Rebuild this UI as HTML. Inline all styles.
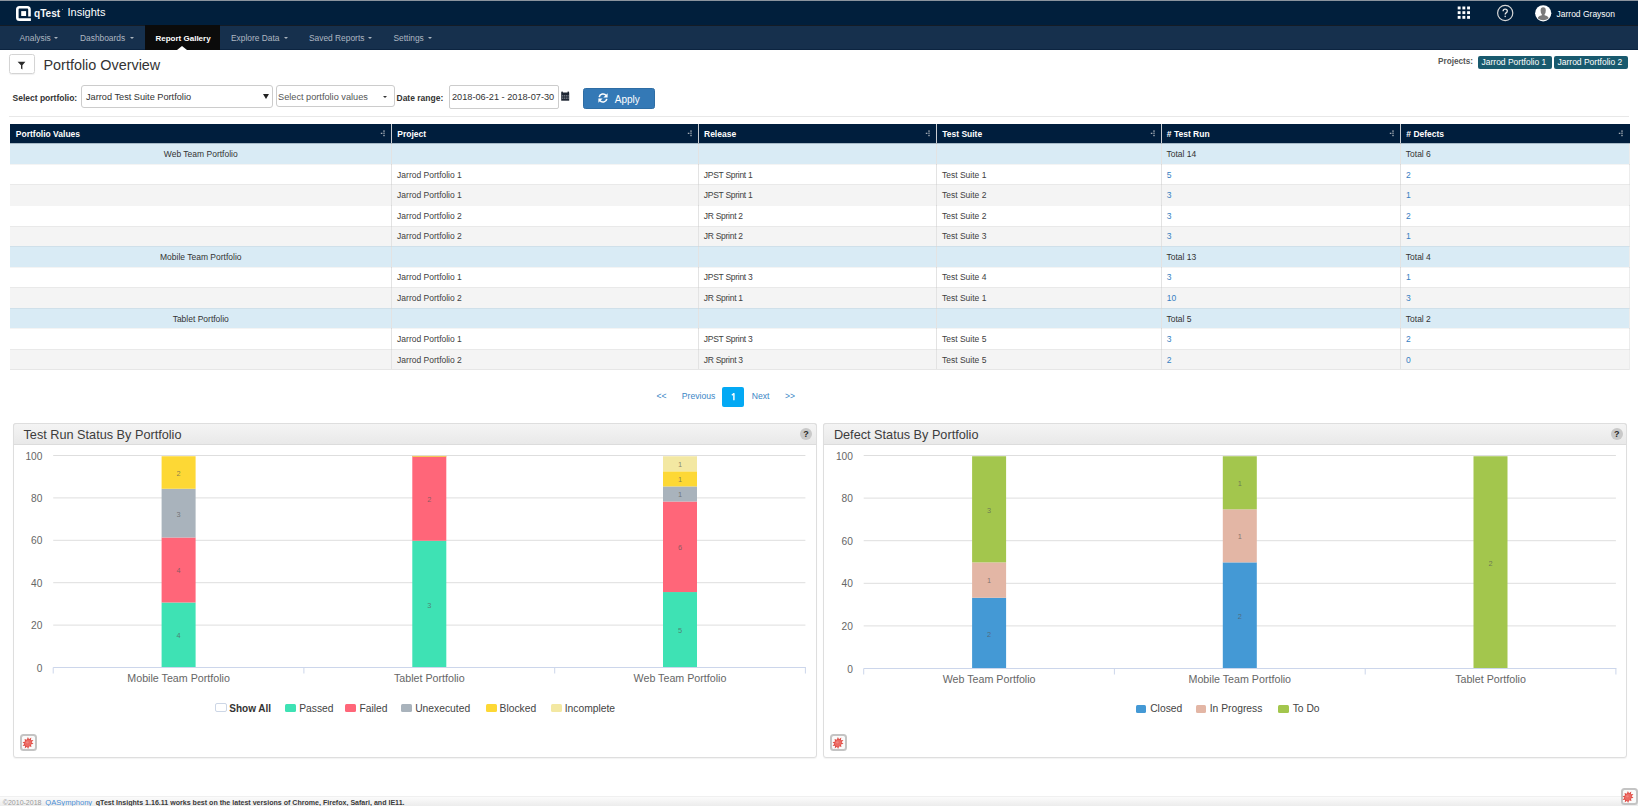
<!DOCTYPE html>
<html><head><meta charset="utf-8"><style>
*{box-sizing:border-box;margin:0;padding:0}
html,body{width:1638px;height:806px;overflow:hidden}
body{position:relative;background:#fff;font-family:"Liberation Sans",sans-serif;color:#333}
.a{position:absolute;white-space:nowrap}
.t{position:absolute;white-space:nowrap;line-height:20px;height:20px}
.hdr{left:0;top:0;width:1638px;height:25.3px;background:#011f3c;border-top:1px solid #8b949e}
.nav{left:0;top:25.3px;width:1638px;height:24.7px;background:#16304d;border-top:1px solid #141c26;border-bottom:1px solid #0c2440}
.navi{color:#aeb7c2;font-size:8.4px;top:28.4px}
.caret{position:absolute;width:0;height:0;border-left:2.6px solid transparent;border-right:2.6px solid transparent;border-top:2.7px solid #aab3bd;margin-top:-0.2px}
.th{color:#fff;font-weight:bold;font-size:8.5px}
.td{color:#404040;font-size:8.5px;margin-top:0.5px}
.lk{color:#3680c2}
.pg{color:#3b86c6;font-size:8.6px}
.lg{color:#444;font-size:10.3px;margin-top:1.2px}
</style></head><body>

<!-- header -->
<div class="a hdr"></div>
<svg class="a" style="left:16px;top:6px" width="17" height="16" viewBox="0 0 17 16">
  <path d="M13.5 10.4 V3.4 Q13.5 1.3 11.4 1.3 H3.4 Q1.3 1.3 1.3 3.4 V11.4 Q1.3 13.6 3.4 13.6 H14.9" fill="none" stroke="#fff" stroke-width="2.6"/>
  <rect x="5.2" y="5.1" width="4.9" height="4.9" fill="#fff"/>
</svg>
<div class="a" style="left:61.5px;top:8.5px;width:1.5px;height:1.5px;border-radius:50%;background:#9aa5b1"></div>
<div class="t" style="left:34px;top:3.7px;color:#f4f6f8;font-size:10.1px;font-weight:bold">qTest</div>
<div class="t" style="left:67.5px;top:2.1px;color:#fff;font-size:11px">Insights</div>

<!-- nav -->
<div class="a nav"></div>
<div class="a" style="left:145px;top:25px;width:75px;height:25px;background:#0b0b0b"></div>
<div class="a" style="left:176.9px;top:46px;width:0;height:0;border-left:5px solid transparent;border-right:5px solid transparent;border-bottom:4.2px solid #fff"></div>
<div class="t navi" style="left:19.5px">Analysis</div><div class="caret" style="left:54.1px;top:37px"></div>
<div class="t navi" style="left:80px">Dashboards</div><div class="caret" style="left:130.4px;top:37px"></div>
<div class="t navi" style="left:155.5px;color:#fff;font-weight:bold;font-size:8px;margin-top:0.8px">Report Gallery</div>
<div class="t navi" style="left:231px">Explore Data</div><div class="caret" style="left:283.6px;top:37px"></div>
<div class="t navi" style="left:309px">Saved Reports</div><div class="caret" style="left:367.8px;top:37px"></div>
<div class="t navi" style="left:393.5px">Settings</div><div class="caret" style="left:428.2px;top:37px"></div>

<!-- header right -->
<svg class="a" style="left:1457px;top:6.2px" width="15" height="14" viewBox="0 0 15 14">
<g fill="#fff"><rect x="0.7" y="0.5" width="2.9" height="2.9"/><rect x="5.4" y="0.5" width="2.9" height="2.9"/><rect x="10.1" y="0.5" width="2.9" height="2.9"/>
<rect x="0.7" y="5.2" width="2.9" height="2.9"/><rect x="5.4" y="5.2" width="2.9" height="2.9"/><rect x="10.1" y="5.2" width="2.9" height="2.9"/>
<rect x="0.7" y="9.9" width="2.9" height="2.9"/><rect x="5.4" y="9.9" width="2.9" height="2.9"/><rect x="10.1" y="9.9" width="2.9" height="2.9"/></g></svg>
<svg class="a" style="left:1496px;top:4.1px" width="18" height="18" viewBox="0 0 18 18">
<circle cx="9.2" cy="9" r="7.6" fill="none" stroke="#d6d6d6" stroke-width="1.2"/>
<path d="M7.1 7.2 Q7.1 5.1 9.2 5.1 Q11.3 5.1 11.3 7 Q11.3 8.2 10.1 8.9 Q9.2 9.5 9.2 10.6" fill="none" stroke="#e6e6e6" stroke-width="1.3"/>
<rect x="8.55" y="11.7" width="1.3" height="1.4" fill="#e6e6e6"/></svg>
<svg class="a" style="left:1535px;top:5px" width="17" height="17" viewBox="0 0 17 17">
<circle cx="8.2" cy="8.3" r="8.1" fill="#fff"/>
<path d="M8.2 2.3 Q10.8 2.3 10.8 5.6 Q10.8 8.2 9.6 9.3 V10.3 Q12.4 11 13.3 12.3 Q13.6 13 13.5 13.6 Q11.2 15.3 8.2 15.3 Q5.2 15.3 2.9 13.6 Q2.8 13 3.1 12.3 Q4 11 6.8 10.3 V9.3 Q5.6 8.2 5.6 5.6 Q5.6 2.3 8.2 2.3 Z" fill="#7a7a7a"/></svg>
<div class="t" style="left:1556.5px;top:4.1px;color:#fff;font-size:8.5px">Jarrod Grayson</div>

<!-- title row -->
<div class="a" style="left:9px;top:54px;width:26px;height:20px;border:1px solid #d4d4d4;border-radius:2.5px;box-shadow:0 1px 1px rgba(0,0,0,.06)"></div>
<svg class="a" style="left:17.3px;top:60.7px" width="10" height="10" viewBox="0 0 10 10"><path d="M0.6 0.8 H8.4 L5.4 4.2 V8.4 L4 7.4 V4.2 Z" fill="#2b2b2b"/></svg>
<div class="t" style="left:43.5px;top:54.5px;font-size:14.4px;color:#333;line-height:20px">Portfolio Overview</div>
<div class="t" style="left:1438px;top:52px;font-size:8.2px;font-weight:bold;color:#555">Projects:</div>
<div class="a" style="left:1477.5px;top:55.6px;width:74px;height:13.4px;background:#195a6e;border-radius:2px"></div>
<div class="a" style="left:1553.5px;top:55.6px;width:74px;height:13.4px;background:#195a6e;border-radius:2px"></div>
<div class="t" style="left:1481.5px;top:52px;font-size:8.5px;color:#fff">Jarrod Portfolio 1</div>
<div class="t" style="left:1557.5px;top:52px;font-size:8.5px;color:#fff">Jarrod Portfolio 2</div>

<!-- filter row -->
<div class="t" style="left:12.5px;top:87.5px;font-size:8.5px;font-weight:bold;color:#333">Select portfolio:</div>
<div class="a" style="left:81px;top:85.4px;width:191.8px;height:22.5px;border:1px solid #ccc;border-radius:3px"></div>
<div class="t" style="left:86px;top:87px;font-size:9.2px;color:#333">Jarrod Test Suite Portfolio</div>
<div class="a" style="left:262.8px;top:94px;width:0;height:0;border-left:3px solid transparent;border-right:3px solid transparent;border-top:5px solid #222"></div>
<div class="a" style="left:276px;top:84.6px;width:119px;height:22.8px;border:1px solid #ccc;border-radius:3px"></div>
<div class="t" style="left:278px;top:87px;font-size:9.2px;color:#555">Select portfolio values</div>
<div class="a" style="left:383.3px;top:96.2px;width:0;height:0;border-left:2.5px solid transparent;border-right:2.5px solid transparent;border-top:2.8px solid #333"></div>
<div class="t" style="left:396.5px;top:88px;font-size:8.5px;font-weight:bold;color:#333">Date range:</div>
<div class="a" style="left:449px;top:85px;width:110px;height:23.5px;border:1px solid #ccc;border-radius:2px"></div>
<div class="t" style="left:452px;top:87px;font-size:9.2px;color:#333">2018-06-21 - 2018-07-30</div>
<svg class="a" style="left:561px;top:91px" width="9" height="10" viewBox="0 0 9 10"><rect x="0.2" y="1.5" width="8" height="8.2" fill="#1e2633"/><rect x="0.4" y="0.6" width="1.5" height="1.5" fill="#1e2633"/><rect x="6.5" y="0.6" width="1.5" height="1.5" fill="#1e2633"/>
<g fill="#8a8f99"><rect x="0.9" y="4.3" width="1.4" height="1.1"/><rect x="2.9" y="4.3" width="1.4" height="1.1"/><rect x="4.9" y="4.3" width="1.4" height="1.1"/><rect x="6.7" y="4.3" width="1" height="1.1"/>
<rect x="0.9" y="6.6" width="1.4" height="1.1"/><rect x="2.9" y="6.6" width="1.4" height="1.1"/><rect x="4.9" y="6.6" width="1.4" height="1.1"/><rect x="6.7" y="6.6" width="1" height="1.1"/></g></svg>
<div class="a" style="left:583px;top:88px;width:72px;height:20.5px;background:#3479b6;border-radius:2.5px;border:1px solid #2e6da4"></div>
<svg class="a" style="left:597px;top:91.5px" width="12" height="12" viewBox="0 0 12 12">
<path d="M2.2 5.2 A3.9 3.9 0 0 1 9.2 3.6" fill="none" stroke="#fff" stroke-width="1.6"/><path d="M10.6 1.2 V5.4 H6.4 Z" fill="#fff"/>
<path d="M9.8 6.8 A3.9 3.9 0 0 1 2.8 8.4" fill="none" stroke="#fff" stroke-width="1.6"/><path d="M1.4 10.8 V6.6 H5.6 Z" fill="#fff"/></svg>
<div class="t" style="left:614.8px;top:89.9px;font-size:10px;color:#fff">Apply</div>
<div class="a" style="left:9px;top:116px;width:1620px;height:1px;background:#e8e8e8"></div>

<!-- table -->
<div class="a" style="left:10px;top:123.7px;width:1619.5px;height:19.5px;background:#001e3d"></div>
<div class="a" style="left:10px;top:143.20px;width:1619.5px;height:20.63px;background:#d9ebf5"></div>
<div class="a" style="left:10px;top:163.78px;width:1619.5px;height:20.63px;background:#ffffff"></div>
<div class="a" style="left:10px;top:184.36px;width:1619.5px;height:20.63px;background:#f4f4f4"></div>
<div class="a" style="left:10px;top:204.94px;width:1619.5px;height:20.63px;background:#ffffff"></div>
<div class="a" style="left:10px;top:225.52px;width:1619.5px;height:20.63px;background:#f4f4f4"></div>
<div class="a" style="left:10px;top:246.10px;width:1619.5px;height:20.63px;background:#d9ebf5"></div>
<div class="a" style="left:10px;top:266.68px;width:1619.5px;height:20.63px;background:#ffffff"></div>
<div class="a" style="left:10px;top:287.26px;width:1619.5px;height:20.63px;background:#f4f4f4"></div>
<div class="a" style="left:10px;top:307.84px;width:1619.5px;height:20.63px;background:#d9ebf5"></div>
<div class="a" style="left:10px;top:328.42px;width:1619.5px;height:20.63px;background:#ffffff"></div>
<div class="a" style="left:10px;top:349.00px;width:1619.5px;height:20.63px;background:#f4f4f4"></div>
<div class="a" style="left:391.0px;top:123.7px;width:1px;height:19.5px;background:#c9cdd2"></div>
<div class="a" style="left:391.0px;top:143.2px;width:1px;height:226.38px;background:#e3e3e3"></div>
<div class="a" style="left:697.7px;top:123.7px;width:1px;height:19.5px;background:#c9cdd2"></div>
<div class="a" style="left:697.7px;top:143.2px;width:1px;height:226.38px;background:#e3e3e3"></div>
<div class="a" style="left:935.9px;top:123.7px;width:1px;height:19.5px;background:#c9cdd2"></div>
<div class="a" style="left:935.9px;top:143.2px;width:1px;height:226.38px;background:#e3e3e3"></div>
<div class="a" style="left:1160.5px;top:123.7px;width:1px;height:19.5px;background:#c9cdd2"></div>
<div class="a" style="left:1160.5px;top:143.2px;width:1px;height:226.38px;background:#e3e3e3"></div>
<div class="a" style="left:1400.0px;top:123.7px;width:1px;height:19.5px;background:#c9cdd2"></div>
<div class="a" style="left:1400.0px;top:143.2px;width:1px;height:226.38px;background:#e3e3e3"></div>
<div class="a" style="left:10px;top:369.08px;width:1619.5px;height:1px;background:#e6e6e6"></div>
<div class="a" style="left:1629px;top:143.2px;width:1px;height:226.4px;background:#ececec"></div>
<div class="a" style="left:10px;top:163.78px;width:1619.5px;height:1px;background:rgba(0,0,0,.045)"></div>
<div class="a" style="left:10px;top:184.36px;width:1619.5px;height:1px;background:rgba(0,0,0,.045)"></div>
<div class="a" style="left:10px;top:204.94px;width:1619.5px;height:1px;background:rgba(0,0,0,.045)"></div>
<div class="a" style="left:10px;top:225.52px;width:1619.5px;height:1px;background:rgba(0,0,0,.045)"></div>
<div class="a" style="left:10px;top:246.10px;width:1619.5px;height:1px;background:rgba(0,0,0,.045)"></div>
<div class="a" style="left:10px;top:266.68px;width:1619.5px;height:1px;background:rgba(0,0,0,.045)"></div>
<div class="a" style="left:10px;top:287.26px;width:1619.5px;height:1px;background:rgba(0,0,0,.045)"></div>
<div class="a" style="left:10px;top:307.84px;width:1619.5px;height:1px;background:rgba(0,0,0,.045)"></div>
<div class="a" style="left:10px;top:328.42px;width:1619.5px;height:1px;background:rgba(0,0,0,.045)"></div>
<div class="a" style="left:10px;top:349.00px;width:1619.5px;height:1px;background:rgba(0,0,0,.045)"></div>
<div class="a" style="left:10px;top:143.2px;width:1619.5px;height:1px;background:rgba(40,60,80,.28)"></div>
<div class="t th" style="left:15.8px;top:123.7px">Portfolio Values</div>
<svg class="a" style="left:380.0px;top:129px" width="6" height="9" viewBox="0 0 6 9"><g fill="#e8e8e8"><rect x="3.5" y="1.4" width="1" height="1.4"/><rect x="3.5" y="3.6" width="1" height="1.2"/><rect x="3.5" y="5.8" width="1" height="1.4"/><rect x="0.8" y="3.8" width="1.6" height="0.9"/></g></svg>
<div class="t th" style="left:397.3px;top:123.7px">Project</div>
<svg class="a" style="left:686.7px;top:129px" width="6" height="9" viewBox="0 0 6 9"><g fill="#e8e8e8"><rect x="3.5" y="1.4" width="1" height="1.4"/><rect x="3.5" y="3.6" width="1" height="1.2"/><rect x="3.5" y="5.8" width="1" height="1.4"/><rect x="0.8" y="3.8" width="1.6" height="0.9"/></g></svg>
<div class="t th" style="left:704.0px;top:123.7px">Release</div>
<svg class="a" style="left:924.9px;top:129px" width="6" height="9" viewBox="0 0 6 9"><g fill="#e8e8e8"><rect x="3.5" y="1.4" width="1" height="1.4"/><rect x="3.5" y="3.6" width="1" height="1.2"/><rect x="3.5" y="5.8" width="1" height="1.4"/><rect x="0.8" y="3.8" width="1.6" height="0.9"/></g></svg>
<div class="t th" style="left:942.2px;top:123.7px">Test Suite</div>
<svg class="a" style="left:1149.5px;top:129px" width="6" height="9" viewBox="0 0 6 9"><g fill="#e8e8e8"><rect x="3.5" y="1.4" width="1" height="1.4"/><rect x="3.5" y="3.6" width="1" height="1.2"/><rect x="3.5" y="5.8" width="1" height="1.4"/><rect x="0.8" y="3.8" width="1.6" height="0.9"/></g></svg>
<div class="t th" style="left:1166.8px;top:123.7px"># Test Run</div>
<svg class="a" style="left:1389.0px;top:129px" width="6" height="9" viewBox="0 0 6 9"><g fill="#e8e8e8"><rect x="3.5" y="1.4" width="1" height="1.4"/><rect x="3.5" y="3.6" width="1" height="1.2"/><rect x="3.5" y="5.8" width="1" height="1.4"/><rect x="0.8" y="3.8" width="1.6" height="0.9"/></g></svg>
<div class="t th" style="left:1406.3px;top:123.7px"># Defects</div>
<svg class="a" style="left:1618.0px;top:129px" width="6" height="9" viewBox="0 0 6 9"><g fill="#e8e8e8"><rect x="3.5" y="1.4" width="1" height="1.4"/><rect x="3.5" y="3.6" width="1" height="1.2"/><rect x="3.5" y="5.8" width="1" height="1.4"/><rect x="0.8" y="3.8" width="1.6" height="0.9"/></g></svg>
<div class="t td" style="left:10px;width:381.5px;text-align:center;top:143.49px;color:#333">Web Team Portfolio</div>
<div class="t td" style="left:1166.5px;top:143.49px;color:#333">Total 14</div>
<div class="t td" style="left:1405.8px;top:143.49px;color:#333">Total 6</div>
<div class="t td" style="left:397.1px;top:164.07px">Jarrod Portfolio 1</div>
<div class="t td" style="left:703.8px;letter-spacing:-0.28px;top:164.07px">JPST Sprint 1</div>
<div class="t td" style="left:942.0px;top:164.07px">Test Suite 1</div>
<div class="t td lk" style="left:1166.8px;top:164.07px">5</div>
<div class="t td lk" style="left:1406px;top:164.07px">2</div>
<div class="t td" style="left:397.1px;top:184.65px">Jarrod Portfolio 1</div>
<div class="t td" style="left:703.8px;letter-spacing:-0.28px;top:184.65px">JPST Sprint 1</div>
<div class="t td" style="left:942.0px;top:184.65px">Test Suite 2</div>
<div class="t td lk" style="left:1166.8px;top:184.65px">3</div>
<div class="t td lk" style="left:1406px;top:184.65px">1</div>
<div class="t td" style="left:397.1px;top:205.23px">Jarrod Portfolio 2</div>
<div class="t td" style="left:703.8px;letter-spacing:-0.28px;top:205.23px">JR Sprint 2</div>
<div class="t td" style="left:942.0px;top:205.23px">Test Suite 2</div>
<div class="t td lk" style="left:1166.8px;top:205.23px">3</div>
<div class="t td lk" style="left:1406px;top:205.23px">2</div>
<div class="t td" style="left:397.1px;top:225.81px">Jarrod Portfolio 2</div>
<div class="t td" style="left:703.8px;letter-spacing:-0.28px;top:225.81px">JR Sprint 2</div>
<div class="t td" style="left:942.0px;top:225.81px">Test Suite 3</div>
<div class="t td lk" style="left:1166.8px;top:225.81px">3</div>
<div class="t td lk" style="left:1406px;top:225.81px">1</div>
<div class="t td" style="left:10px;width:381.5px;text-align:center;top:246.39px;color:#333">Mobile Team Portfolio</div>
<div class="t td" style="left:1166.5px;top:246.39px;color:#333">Total 13</div>
<div class="t td" style="left:1405.8px;top:246.39px;color:#333">Total 4</div>
<div class="t td" style="left:397.1px;top:266.97px">Jarrod Portfolio 1</div>
<div class="t td" style="left:703.8px;letter-spacing:-0.28px;top:266.97px">JPST Sprint 3</div>
<div class="t td" style="left:942.0px;top:266.97px">Test Suite 4</div>
<div class="t td lk" style="left:1166.8px;top:266.97px">3</div>
<div class="t td lk" style="left:1406px;top:266.97px">1</div>
<div class="t td" style="left:397.1px;top:287.55px">Jarrod Portfolio 2</div>
<div class="t td" style="left:703.8px;letter-spacing:-0.28px;top:287.55px">JR Sprint 1</div>
<div class="t td" style="left:942.0px;top:287.55px">Test Suite 1</div>
<div class="t td lk" style="left:1166.8px;top:287.55px">10</div>
<div class="t td lk" style="left:1406px;top:287.55px">3</div>
<div class="t td" style="left:10px;width:381.5px;text-align:center;top:308.13px;color:#333">Tablet Portfolio</div>
<div class="t td" style="left:1166.5px;top:308.13px;color:#333">Total 5</div>
<div class="t td" style="left:1405.8px;top:308.13px;color:#333">Total 2</div>
<div class="t td" style="left:397.1px;top:328.71px">Jarrod Portfolio 1</div>
<div class="t td" style="left:703.8px;letter-spacing:-0.28px;top:328.71px">JPST Sprint 3</div>
<div class="t td" style="left:942.0px;top:328.71px">Test Suite 5</div>
<div class="t td lk" style="left:1166.8px;top:328.71px">3</div>
<div class="t td lk" style="left:1406px;top:328.71px">2</div>
<div class="t td" style="left:397.1px;top:349.29px">Jarrod Portfolio 2</div>
<div class="t td" style="left:703.8px;letter-spacing:-0.28px;top:349.29px">JR Sprint 3</div>
<div class="t td" style="left:942.0px;top:349.29px">Test Suite 5</div>
<div class="t td lk" style="left:1166.8px;top:349.29px">2</div>
<div class="t td lk" style="left:1406px;top:349.29px">0</div>

<!-- pagination -->
<div class="t pg" style="left:656.5px;top:385.5px">&lt;&lt;</div>
<div class="t pg" style="left:681.8px;top:385.5px">Previous</div>
<div class="a" style="left:722.2px;top:386.7px;width:21.8px;height:20.6px;background:#03a9f4;border-radius:2px"></div>
<svg class="a" style="left:730px;top:392px" width="7" height="10" viewBox="0 0 7 10"><path d="M3.9 1.2 V8.3" stroke="#fff" stroke-width="1.45" fill="none"/><path d="M1.8 3.3 L3.9 1.4" stroke="#fff" stroke-width="1.2" fill="none"/></svg>
<div class="t pg" style="left:751.8px;top:385.5px">Next</div>
<div class="t pg" style="left:785px;top:385.5px">&gt;&gt;</div>

<!-- charts -->
<div class="a" style="left:13px;top:423px;width:804px;height:335px;border:1px solid #dedede;border-radius:3px;background:#fff;box-shadow:0 1px 1px rgba(0,0,0,.05)"></div>
<div class="a" style="left:13px;top:423px;width:804px;height:22px;border:1px solid #dedede;border-bottom:1px solid #dcdcdc;border-radius:3px 3px 0 0;background:linear-gradient(#f4f4f4,#e9e9e9)"></div>
<div class="t" style="left:23.5px;top:424.7px;font-size:12.7px;color:#3c3c3c">Test Run Status By Portfolio</div>
<div class="a" style="left:823px;top:423px;width:804px;height:335px;border:1px solid #dedede;border-radius:3px;background:#fff;box-shadow:0 1px 1px rgba(0,0,0,.05)"></div>
<div class="a" style="left:823px;top:423px;width:804px;height:22px;border:1px solid #dedede;border-bottom:1px solid #dcdcdc;border-radius:3px 3px 0 0;background:linear-gradient(#f4f4f4,#e9e9e9)"></div>
<div class="t" style="left:833.9px;top:424.7px;font-size:12.7px;color:#3c3c3c">Defect Status By Portfolio</div>
<svg class="a" style="left:0;top:440px" width="1638" height="260" viewBox="0 440 1638 260">
<rect x="53.2" y="455.00" width="752.2" height="1" fill="#dedede"/>
<rect x="53.2" y="497.40" width="752.2" height="1" fill="#dedede"/>
<rect x="53.2" y="539.80" width="752.2" height="1" fill="#dedede"/>
<rect x="53.2" y="582.20" width="752.2" height="1" fill="#dedede"/>
<rect x="53.2" y="624.60" width="752.2" height="1" fill="#dedede"/>
<rect x="161.6" y="602.50" width="34" height="65.00" fill="#3ee2b4"/>
<rect x="161.6" y="537.50" width="34" height="65.00" fill="#ff6679"/>
<rect x="161.6" y="488.75" width="34" height="48.75" fill="#a9b3bc"/>
<rect x="161.6" y="456.25" width="34" height="32.50" fill="#fdd835"/>
<text x="178.6" y="638.40" text-anchor="middle" font-family="Liberation Sans" font-size="7.4" fill="#555" fill-opacity=".7">4</text>
<text x="178.6" y="573.40" text-anchor="middle" font-family="Liberation Sans" font-size="7.4" fill="#555" fill-opacity=".7">4</text>
<text x="178.6" y="516.52" text-anchor="middle" font-family="Liberation Sans" font-size="7.4" fill="#555" fill-opacity=".7">3</text>
<text x="178.6" y="475.90" text-anchor="middle" font-family="Liberation Sans" font-size="7.4" fill="#555" fill-opacity=".7">2</text>
<rect x="412.3" y="540.75" width="34" height="126.75" fill="#3ee2b4"/>
<rect x="412.3" y="456.25" width="34" height="84.50" fill="#ff6679"/>
<rect x="412.3" y="455.90" width="34" height="1.1" fill="#f5c85a"/>
<text x="429.3" y="607.52" text-anchor="middle" font-family="Liberation Sans" font-size="7.4" fill="#555" fill-opacity=".7">3</text>
<text x="429.3" y="501.90" text-anchor="middle" font-family="Liberation Sans" font-size="7.4" fill="#555" fill-opacity=".7">2</text>
<rect x="663.0" y="592.05" width="34" height="75.45" fill="#3ee2b4"/>
<rect x="663.0" y="501.52" width="34" height="90.54" fill="#ff6679"/>
<rect x="663.0" y="486.43" width="34" height="15.09" fill="#a9b3bc"/>
<rect x="663.0" y="471.34" width="34" height="15.09" fill="#fdd835"/>
<rect x="663.0" y="456.25" width="34" height="15.09" fill="#f3e8a2"/>
<text x="680.0" y="633.18" text-anchor="middle" font-family="Liberation Sans" font-size="7.4" fill="#555" fill-opacity=".7">5</text>
<text x="680.0" y="550.19" text-anchor="middle" font-family="Liberation Sans" font-size="7.4" fill="#555" fill-opacity=".7">6</text>
<text x="680.0" y="497.37" text-anchor="middle" font-family="Liberation Sans" font-size="7.4" fill="#555" fill-opacity=".7">1</text>
<text x="680.0" y="482.28" text-anchor="middle" font-family="Liberation Sans" font-size="7.4" fill="#555" fill-opacity=".7">1</text>
<text x="680.0" y="467.19" text-anchor="middle" font-family="Liberation Sans" font-size="7.4" fill="#555" fill-opacity=".7">1</text>
<rect x="53.2" y="667.00" width="752.7" height="1" fill="#ccd6eb"/>
<rect x="52.7" y="667.5" width="1" height="6" fill="#ccd6eb"/>
<rect x="303.4" y="667.5" width="1" height="6" fill="#ccd6eb"/>
<rect x="554.2" y="667.5" width="1" height="6" fill="#ccd6eb"/>
<rect x="804.9" y="667.5" width="1" height="6" fill="#ccd6eb"/>
<text x="42.4" y="459.60" text-anchor="end" font-family="Liberation Sans" font-size="10.2" fill="#666">100</text>
<text x="42.4" y="502.00" text-anchor="end" font-family="Liberation Sans" font-size="10.2" fill="#666">80</text>
<text x="42.4" y="544.40" text-anchor="end" font-family="Liberation Sans" font-size="10.2" fill="#666">60</text>
<text x="42.4" y="586.80" text-anchor="end" font-family="Liberation Sans" font-size="10.2" fill="#666">40</text>
<text x="42.4" y="629.20" text-anchor="end" font-family="Liberation Sans" font-size="10.2" fill="#666">20</text>
<text x="42.4" y="671.60" text-anchor="end" font-family="Liberation Sans" font-size="10.2" fill="#666">0</text>
<text x="178.6" y="682.40" text-anchor="middle" font-family="Liberation Sans" font-size="10.7" fill="#666">Mobile Team Portfolio</text>
<text x="429.3" y="682.40" text-anchor="middle" font-family="Liberation Sans" font-size="10.7" fill="#666">Tablet Portfolio</text>
<text x="680.0" y="682.40" text-anchor="middle" font-family="Liberation Sans" font-size="10.7" fill="#666">Web Team Portfolio</text>
</svg>
<svg class="a" style="left:0;top:440px" width="1638" height="260" viewBox="0 440 1638 260">
<rect x="863.7" y="455.00" width="752.2" height="1" fill="#dedede"/>
<rect x="863.7" y="497.60" width="752.2" height="1" fill="#dedede"/>
<rect x="863.7" y="540.20" width="752.2" height="1" fill="#dedede"/>
<rect x="863.7" y="582.80" width="752.2" height="1" fill="#dedede"/>
<rect x="863.7" y="625.40" width="752.2" height="1" fill="#dedede"/>
<rect x="972.1" y="597.75" width="34" height="70.75" fill="#4499d5"/>
<rect x="972.1" y="562.38" width="34" height="35.38" fill="#e3b6a5"/>
<rect x="972.1" y="456.25" width="34" height="106.12" fill="#a3c64d"/>
<text x="989.1" y="636.52" text-anchor="middle" font-family="Liberation Sans" font-size="7.4" fill="#555" fill-opacity=".7">2</text>
<text x="989.1" y="583.46" text-anchor="middle" font-family="Liberation Sans" font-size="7.4" fill="#555" fill-opacity=".7">1</text>
<text x="989.1" y="512.71" text-anchor="middle" font-family="Liberation Sans" font-size="7.4" fill="#555" fill-opacity=".7">3</text>
<rect x="1222.8" y="562.38" width="34" height="106.12" fill="#4499d5"/>
<rect x="1222.8" y="509.31" width="34" height="53.06" fill="#e3b6a5"/>
<rect x="1222.8" y="456.25" width="34" height="53.06" fill="#a3c64d"/>
<text x="1239.8" y="618.84" text-anchor="middle" font-family="Liberation Sans" font-size="7.4" fill="#555" fill-opacity=".7">2</text>
<text x="1239.8" y="539.24" text-anchor="middle" font-family="Liberation Sans" font-size="7.4" fill="#555" fill-opacity=".7">1</text>
<text x="1239.8" y="486.18" text-anchor="middle" font-family="Liberation Sans" font-size="7.4" fill="#555" fill-opacity=".7">1</text>
<rect x="1473.5" y="456.25" width="34" height="212.25" fill="#a3c64d"/>
<text x="1490.5" y="565.77" text-anchor="middle" font-family="Liberation Sans" font-size="7.4" fill="#555" fill-opacity=".7">2</text>
<rect x="863.7" y="668.00" width="752.7" height="1" fill="#ccd6eb"/>
<rect x="863.2" y="668.5" width="1" height="6" fill="#ccd6eb"/>
<rect x="1113.9" y="668.5" width="1" height="6" fill="#ccd6eb"/>
<rect x="1364.7" y="668.5" width="1" height="6" fill="#ccd6eb"/>
<rect x="1615.4" y="668.5" width="1" height="6" fill="#ccd6eb"/>
<text x="852.9" y="459.60" text-anchor="end" font-family="Liberation Sans" font-size="10.2" fill="#666">100</text>
<text x="852.9" y="502.20" text-anchor="end" font-family="Liberation Sans" font-size="10.2" fill="#666">80</text>
<text x="852.9" y="544.80" text-anchor="end" font-family="Liberation Sans" font-size="10.2" fill="#666">60</text>
<text x="852.9" y="587.40" text-anchor="end" font-family="Liberation Sans" font-size="10.2" fill="#666">40</text>
<text x="852.9" y="630.00" text-anchor="end" font-family="Liberation Sans" font-size="10.2" fill="#666">20</text>
<text x="852.9" y="672.60" text-anchor="end" font-family="Liberation Sans" font-size="10.2" fill="#666">0</text>
<text x="989.1" y="683.40" text-anchor="middle" font-family="Liberation Sans" font-size="10.7" fill="#666">Web Team Portfolio</text>
<text x="1239.8" y="683.40" text-anchor="middle" font-family="Liberation Sans" font-size="10.7" fill="#666">Mobile Team Portfolio</text>
<text x="1490.5" y="683.40" text-anchor="middle" font-family="Liberation Sans" font-size="10.7" fill="#666">Tablet Portfolio</text>
</svg>

<!-- legends -->
<div class="a" style="left:214.8px;top:703.3px;width:11.9px;height:9.4px;height:9.2px;border:1px solid #ccd6e6;border-radius:2px;background:#fff"></div>
<div class="t lg" style="left:229.3px;top:697.9px;font-weight:bold;color:#333;"><span style="font-size:10px">Show All</span></div>
<div class="a" style="left:284.6px;top:703.9px;width:11.0px;height:8px;background:#3ee2b4;border-radius:1.5px"></div>
<div class="t lg" style="left:299.2px;top:697.9px;">Passed</div>
<div class="a" style="left:345.3px;top:703.9px;width:11.2px;height:8px;background:#ff6679;border-radius:1.5px"></div>
<div class="t lg" style="left:359.5px;top:697.9px;">Failed</div>
<div class="a" style="left:401.0px;top:703.9px;width:11.0px;height:8px;background:#a9b3bc;border-radius:1.5px"></div>
<div class="t lg" style="left:415.2px;top:697.9px;">Unexecuted</div>
<div class="a" style="left:485.8px;top:703.9px;width:11.2px;height:8px;background:#fdd835;border-radius:1.5px"></div>
<div class="t lg" style="left:499.6px;top:697.9px;">Blocked</div>
<div class="a" style="left:550.9px;top:703.9px;width:11.1px;height:8px;background:#f3e8a2;border-radius:1.5px"></div>
<div class="t lg" style="left:564.7px;top:697.9px;">Incomplete</div>
<div class="a" style="left:1135.9px;top:704.6px;width:10.6px;height:8px;background:#4499d5;border-radius:1.5px"></div>
<div class="t lg" style="margin-top:0.6px;left:1150.2px;top:698.6px;">Closed</div>
<div class="a" style="left:1195.7px;top:704.6px;width:10.5px;height:8px;background:#e3b6a5;border-radius:1.5px"></div>
<div class="t lg" style="margin-top:0.6px;left:1209.7px;top:698.6px;">In Progress</div>
<div class="a" style="left:1278.1px;top:704.6px;width:10.9px;height:8px;background:#a3c64d;border-radius:1.5px"></div>
<div class="t lg" style="margin-top:0.6px;left:1292.7px;top:698.6px;">To Do</div>
<div class="a" style="left:800.0px;top:428.1px;width:12px;height:12px;border-radius:50%;background:#c9c9c9"></div>
<div class="t" style="left:800.0px;width:12px;text-align:center;top:424.3px;font-size:9px;font-weight:bold;color:#2a2a2a">?</div>
<div class="a" style="left:1610.7px;top:428.1px;width:12px;height:12px;border-radius:50%;background:#c9c9c9"></div>
<div class="t" style="left:1610.7px;width:12px;text-align:center;top:424.3px;font-size:9px;font-weight:bold;color:#2a2a2a">?</div>
<div class="a" style="left:20px;top:733.7px;width:17px;height:17px;border:2px solid #c4c4c4;border-radius:3.5px;background:#fafafa"></div>
<svg class="a" style="left:21.5px;top:736.8px" width="12" height="12" viewBox="0 0 12 12"><polygon points="11.47,6.67 8.94,7.58 9.44,10.12 7.17,9.34 6.10,12.00 4.95,9.82 2.71,11.59 3.13,8.84 0.59,9.04 2.41,6.78 0.53,5.33 3.06,4.42 2.56,1.88 4.83,2.66 5.90,0.00 7.05,2.18 9.29,0.41 8.87,3.16 11.41,2.96 9.59,5.22" fill="#de4a43"/><ellipse cx="6" cy="6.1" rx="3.6" ry="3.1" transform="rotate(-55 6 6)" fill="#ec6a63"/><ellipse cx="5.4" cy="5.3" rx="1.4" ry="1.1" fill="#f39a94" opacity=".6"/></svg>
<div class="a" style="left:830.2px;top:733.7px;width:17px;height:17px;border:2px solid #c4c4c4;border-radius:3.5px;background:#fafafa"></div>
<svg class="a" style="left:831.7px;top:736.8px" width="12" height="12" viewBox="0 0 12 12"><polygon points="11.47,6.67 8.94,7.58 9.44,10.12 7.17,9.34 6.10,12.00 4.95,9.82 2.71,11.59 3.13,8.84 0.59,9.04 2.41,6.78 0.53,5.33 3.06,4.42 2.56,1.88 4.83,2.66 5.90,0.00 7.05,2.18 9.29,0.41 8.87,3.16 11.41,2.96 9.59,5.22" fill="#de4a43"/><ellipse cx="6" cy="6.1" rx="3.6" ry="3.1" transform="rotate(-55 6 6)" fill="#ec6a63"/><ellipse cx="5.4" cy="5.3" rx="1.4" ry="1.1" fill="#f39a94" opacity=".6"/></svg>
<div class="a" style="left:0;top:795.5px;width:1638px;height:10.5px;background:linear-gradient(#fbfbfb,#ececec);border-top:1px solid #f0f0f0"></div>
<div class="t" style="left:2.8px;top:793.2px;font-size:7px;color:#9a9a9a">&copy;2010-2018</div>
<div class="t" style="left:45.3px;top:793.2px;font-size:7.6px;color:#4a8fd6">QASymphony</div>
<div class="t" style="left:95.8px;top:793.2px;font-size:7.07px;font-weight:bold;color:#3a3a3a">qTest Insights 1.16.11 works best on the latest versions of Chrome, Firefox, Safari, and IE11.</div>
<div class="a" style="left:1620.7px;top:787.5px;width:17px;height:17px;border:2px solid #c4c4c4;border-radius:3.5px;background:#fafafa"></div>
<svg class="a" style="left:1622.2px;top:790.6px" width="12" height="12" viewBox="0 0 12 12"><polygon points="11.47,6.67 8.94,7.58 9.44,10.12 7.17,9.34 6.10,12.00 4.95,9.82 2.71,11.59 3.13,8.84 0.59,9.04 2.41,6.78 0.53,5.33 3.06,4.42 2.56,1.88 4.83,2.66 5.90,0.00 7.05,2.18 9.29,0.41 8.87,3.16 11.41,2.96 9.59,5.22" fill="#de4a43"/><ellipse cx="6" cy="6.1" rx="3.6" ry="3.1" transform="rotate(-55 6 6)" fill="#ec6a63"/><ellipse cx="5.4" cy="5.3" rx="1.4" ry="1.1" fill="#f39a94" opacity=".6"/></svg>

</body></html>
